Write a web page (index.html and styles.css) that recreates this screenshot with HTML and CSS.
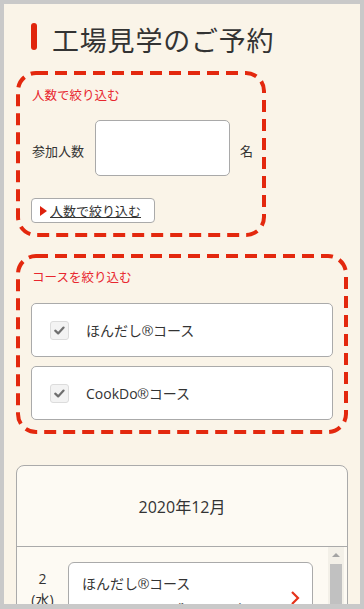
FILE: index.html
```html
<!DOCTYPE html>
<html lang="ja">
<head>
<meta charset="utf-8">
<title>工場見学のご予約</title>
<link rel="stylesheet" href="styles.css">
</head>
<body>
<div class="frame">
  <div class="screen">
    <h1 class="title"><span class="title-bar"></span><span class="title-text">工場見学のご予約</span></h1>

    <section class="filter filter-people">
      <svg class="dash" aria-hidden="true"><rect class="dash-rect" x="2" y="2" rx="18" ry="18"/></svg>
      <div class="filter-label">人数で絞り込む</div>
      <div class="people-row">
        <span class="people-label">参加人数</span>
        <span class="people-input"></span>
        <span class="people-unit">名</span>
      </div>
      <div class="btn-row">
        <span class="filter-btn"><span class="tri"></span><span class="btn-text">人数で絞り込む</span></span>
      </div>
    </section>

    <section class="filter filter-course">
      <svg class="dash" aria-hidden="true"><rect class="dash-rect" x="2" y="2" rx="18" ry="18"/></svg>
      <div class="filter-label">コースを絞り込む</div>
      <div class="course-list">
        <div class="course-card">
          <span class="checkbox"><svg viewBox="0 0 20 20" width="19" height="19"><path d="M5 10.2 L8.4 13.4 L14.8 6.6" fill="none" stroke="#6f6f6f" stroke-width="2.6" stroke-linecap="round" stroke-linejoin="round"/></svg></span>
          <span class="course-name">ほんだし<span class="reg">®</span>コース</span>
        </div>
        <div class="course-card">
          <span class="checkbox"><svg viewBox="0 0 20 20" width="19" height="19"><path d="M5 10.2 L8.4 13.4 L14.8 6.6" fill="none" stroke="#6f6f6f" stroke-width="2.6" stroke-linecap="round" stroke-linejoin="round"/></svg></span>
          <span class="course-name">CookDo<span class="reg">®</span>コース</span>
        </div>
      </div>
    </section>

    <section class="calendar">
      <div class="cal-head">2020年12月</div>
      <div class="cal-body">
        <div class="cal-date">
          <span class="day">2</span>
          <span class="dow">(水)</span>
        </div>
        <div class="cal-events">
          <div class="event-card">
            <div class="event-name">ほんだし<span class="reg">®</span>コース</div>
            <div class="event-info">残り 120名</div>
            <svg class="chev" viewBox="0 0 10 16" width="10" height="16"><path d="M2 2 L8 8 L2 14" fill="none" stroke="#e5331b" stroke-width="2.2"/></svg>
          </div>
        </div>
        <div class="scrollbar">
          <span class="sb-arrow"></span>
          <span class="sb-thumb"></span>
        </div>
      </div>
    </section>
  </div>
</div>
</body>
</html>
```

FILE: styles.css
```css
html, body {
  margin: 0;
  padding: 0;
}
body {
  font-family: "Open Sans", "Noto Sans CJK JP", sans-serif;
  color: #333;
}
.frame {
  width: 364px;
  height: 609px;
  box-sizing: border-box;
  border: 4px solid #c9c9c9;
  border-bottom-width: 5px;
  background: #faf4e8;
  overflow: hidden;
}
.screen {
  padding: 0 12px;
}
.title {
  margin: 0;
  padding: 19px 0 0 15px;
  display: flex;
  align-items: flex-start;
  font-weight: normal;
}
.title-bar {
  width: 6px;
  height: 27px;
  border-radius: 3px;
  background: #e0250c;
  flex: none;
}
.title-text {
  margin-left: 15px;
  font-family: "Noto Sans CJK JP", sans-serif;
  font-size: 27px;
  line-height: 35px;
  margin-top: -1px;
  color: #333;
  letter-spacing: 0.8px;
}
.filter {
  position: relative;
  box-sizing: border-box;
}
.dash {
  position: absolute;
  left: 0;
  top: 0;
  width: 100%;
  height: 100%;
  pointer-events: none;
  overflow: visible;
}
.dash-rect {
  width: calc(100% - 4px);
  height: calc(100% - 4px);
  fill: none;
  stroke: #e3280e;
  stroke-width: 4;
  stroke-dasharray: 12 7;
}
.filter-people {
  margin-top: 14px;
  width: 250px;
  padding: 14px 16px 14px 16px;
}
.filter-label {
  font-family: "Noto Sans CJK JP", sans-serif;
  font-size: 12.5px;
  line-height: 19px;
  color: #e8262e;
}
.people-row {
  margin-top: 16px;
  display: flex;
  align-items: center;
  font-family: "Noto Sans CJK JP", sans-serif;
  font-size: 13px;
  white-space: nowrap;
}
.people-label {
  flex: none;
  padding-top: 5px;
}
.people-input {
  flex: none;
  width: 135px;
  height: 56px;
  box-sizing: border-box;
  border: 1px solid #a9a9a9;
  border-radius: 5px;
  background: #fff;
  margin: 0 10px 0 11px;
}
.people-unit {
  flex: none;
  padding-top: 5px;
}
.btn-row {
  margin-top: 22px;
  display: flex;
}
.filter-btn {
  display: inline-flex;
  align-items: center;
  width: 124px;
  height: 25px;
  box-sizing: border-box;
  border: 1px solid #aaa;
  border-radius: 4px;
  background: #fff;
  padding-left: 8px;
  margin-left: -1px;
}
.tri {
  width: 0;
  height: 0;
  border-top: 5px solid transparent;
  border-bottom: 5px solid transparent;
  border-left: 7px solid #dd210d;
}
.btn-text {
  margin-left: 3px;
  font-family: "Noto Sans CJK JP", sans-serif;
  font-size: 13px;
  line-height: 18px;
  text-decoration: underline;
  color: #333;
}
.filter-course {
  margin-top: 17px;
  width: 332px;
  padding: 13px 15px 14px 15px;
}
.filter-course .filter-label {
  padding-left: 1px;
}
.course-list {
  margin-top: 17px;
  display: flex;
  flex-direction: column;
  gap: 9px;
}
.course-card {
  height: 54px;
  box-sizing: border-box;
  border: 1px solid #aaa;
  border-radius: 5px;
  background: #fff;
  display: flex;
  align-items: center;
}
.checkbox {
  width: 19px;
  height: 19px;
  box-sizing: border-box;
  margin-left: 18px;
  border: 1px solid #dcdcdc;
  border-radius: 3px;
  background: #f3f3f3;
  display: flex;
  align-items: center;
  justify-content: center;
}
.checkbox svg {
  display: block;
}
.course-name {
  margin-left: 17px;
  font-size: 14px;
  color: #333;
}
.reg {
  font-family: "Liberation Sans", sans-serif;
  font-size: 15px;
}
.calendar {
  margin-top: 31px;
  border: 1px solid #aaa;
  border-radius: 8px;
  background: #fdfaf3;
}
.cal-head {
  height: 80px;
  display: flex;
  align-items: center;
  justify-content: center;
  font-size: 16px;
  border-bottom: 1px solid #aaa;
  color: #333;
}
.cal-body {
  display: flex;
  height: 200px;
}
.cal-date {
  width: 51px;
  display: flex;
  flex-direction: column;
  align-items: center;
  padding-top: 21px;
  font-size: 14px;
  line-height: 21px;
}
.cal-events {
  flex: 1;
  padding-top: 15px;
}
.event-card {
  position: relative;
  width: 245px;
  height: 120px;
  box-sizing: border-box;
  border: 1px solid #aaa;
  border-radius: 6px;
  background: #fff;
  padding: 11px 13px;
}
.event-name {
  font-size: 14px;
  line-height: 20px;
}
.event-info {
  font-size: 16px;
  line-height: 24px;
  padding-left: 88px;
  margin-top: 5px;
}
.chev {
  position: absolute;
  right: 12px;
  top: 27px;
}
.scrollbar {
  width: 16px;
  margin-left: 15px;
  margin-right: 3px;
  background: #f3f0e8;
  display: flex;
  flex-direction: column;
  align-items: center;
}
.sb-arrow {
  margin-top: 6px;
  width: 0;
  height: 0;
  border-left: 4px solid transparent;
  border-right: 4px solid transparent;
  border-bottom: 4px solid #a3a3a3;
}
.sb-thumb {
  margin-top: 7px;
  width: 12px;
  height: 160px;
  background: #c1c1c1;
}
```
